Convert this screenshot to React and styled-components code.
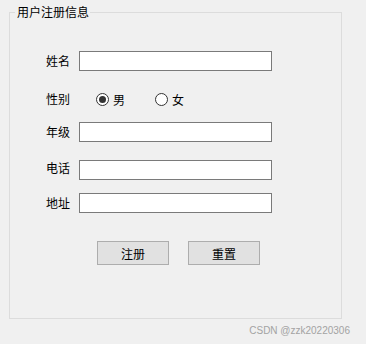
import React, { useState } from 'react';
import styled, { createGlobalStyle } from 'styled-components';

const GlobalStyle = createGlobalStyle`
  html, body {
    margin: 0;
    padding: 0;
    background: #f0f0f0;
  }
  body {
    font-family: "Noto Sans CJK SC", "Microsoft YaHei", sans-serif;
    font-size: 12px;
    color: #000000;
  }
`;

const Page = styled.div`
  width: 366px;
  height: 344px;
  padding: 4px 0 0 9px;
  box-sizing: border-box;
`;

const Group = styled.fieldset`
  width: 333px;
  height: 315px;
  box-sizing: border-box;
  margin: 0;
  padding: 0 0 0 36px;
  border: 1px solid #dcdcdc;
`;

const Legend = styled.legend`
  padding: 0 1px 0 2px;
  font-size: 12px;
  line-height: 16px;
  margin-left: -31px;
`;

const Form = styled.div`
  display: flex;
  flex-direction: column;
  padding-top: 31px;
`;

const Row = styled.div`
  display: flex;
  align-items: center;
  height: 20px;
  margin-top: ${({ gap }) => gap || 0}px;
`;

const Label = styled.span`
  width: 33px;
  flex-shrink: 0;
  line-height: 20px;
  position: relative;
  top: ${({ shift }) => shift || 0}px;
`;

const TextInput = styled.input`
  width: 193px;
  height: 20px;
  box-sizing: border-box;
  margin: 0;
  padding: 0 3px;
  border: 1px solid #7a7a7a;
  background: #ffffff;
  font: inherit;
  outline: none;
`;

const RadioGroup = styled.div`
  display: flex;
  align-items: center;
  padding-left: 17px;
`;

const RadioOption = styled.label`
  display: flex;
  align-items: center;
  gap: 4px;
  margin-right: ${({ spacing }) => spacing || 0}px;
  cursor: pointer;
`;

const RadioCircle = styled.span`
  width: 13px;
  height: 13px;
  box-sizing: border-box;
  border-radius: 50%;
  border: 1px solid #333333;
  background: #ffffff;
  display: flex;
  align-items: center;
  justify-content: center;

  &::after {
    content: '';
    width: 7px;
    height: 7px;
    border-radius: 50%;
    background: ${({ checked }) => (checked ? '#333333' : 'transparent')};
  }
`;

const ButtonBar = styled.div`
  display: flex;
  gap: 19px;
  margin-top: 28px;
  padding-left: 51px;
`;

const Button = styled.button`
  width: 72px;
  height: 24px;
  box-sizing: border-box;
  margin: 0;
  padding: 0;
  border: 1px solid #adadad;
  background: #e1e1e1;
  font: inherit;
  color: #000000;
`;

const Watermark = styled.div`
  margin-top: 6px;
  padding-right: 16px;
  text-align: right;
  font-family: "Liberation Sans", Arial, sans-serif;
  font-size: 10px;
  line-height: 12px;
  color: #a3a3a3;
`;

const fields = [
  { label: '年级', gap: 13 },
  { label: '电话', gap: 18, shift: -2 },
  { label: '地址', gap: 13 },
];

export default function App() {
  const [gender, setGender] = useState('male');

  return (
    <>
      <GlobalStyle />
      <Page>
        <Group>
          <Legend>用户注册信息</Legend>
          <Form>
            <Row>
              <Label>姓名</Label>
              <TextInput />
            </Row>
            <Row gap={18}>
              <Label>性别</Label>
              <RadioGroup>
                <RadioOption spacing={30} onClick={() => setGender('male')}>
                  <RadioCircle checked={gender === 'male'} />
                  男
                </RadioOption>
                <RadioOption onClick={() => setGender('female')}>
                  <RadioCircle checked={gender === 'female'} />
                  女
                </RadioOption>
              </RadioGroup>
            </Row>
            {fields.map((f) => (
              <Row key={f.label} gap={f.gap}>
                <Label shift={f.shift}>{f.label}</Label>
                <TextInput />
              </Row>
            ))}
            <ButtonBar>
              <Button>注册</Button>
              <Button>重置</Button>
            </ButtonBar>
          </Form>
        </Group>
        <Watermark>CSDN @zzk20220306</Watermark>
      </Page>
    </>
  );
}
